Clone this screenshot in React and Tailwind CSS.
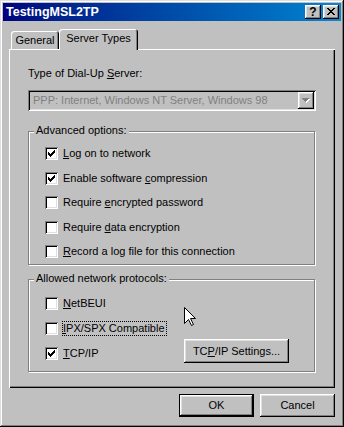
import React from "react";

const raised =
  "shadow-[inset_-1px_-1px_0_#000,inset_1px_1px_0_#fff,inset_-2px_-2px_0_#808080,inset_2px_2px_0_#dfdfdf]";
const sunken =
  "shadow-[inset_1px_1px_0_#808080,inset_-1px_-1px_0_#fff,inset_2px_2px_0_#000,inset_-2px_-2px_0_#dfdfdf]";

function Check({ checked }) {
  return (
    <span className={`relative block w-[13px] h-[13px] shrink-0 bg-white ${sunken}`}>
      {checked && (
        <svg
          width="7"
          height="7"
          viewBox="0 0 7 7"
          shapeRendering="crispEdges"
          className="absolute left-[3px] top-[3px]"
        >
          <path
            fill="#000"
            d="M6 0h1v1h-1zM5 1h2v1h-2zM0 2h1v1h-1zM4 2h3v1h-3zM0 3h2v1h-2zM3 3h3v1h-3zM0 4h5v1h-5zM1 5h3v1h-3zM2 6h1v1h-1z"
          />
        </svg>
      )}
    </span>
  );
}

function Row({ checked, children }) {
  return (
    <div className="flex items-center h-[13px] pl-[16px]">
      <Check checked={checked} />
      <span className="ml-[5px] leading-[13px] whitespace-nowrap">{children}</span>
    </div>
  );
}

function Group({ label, className, children }) {
  return (
    <div
      className={`relative w-[287px] border border-[#808080] shadow-[inset_1px_1px_0_#fff,1px_1px_0_#fff] ${className}`}
    >
      <span className="absolute left-[5px] top-[-8px] px-[2px] bg-[#c0c0c0] leading-[13px] whitespace-nowrap">
        {label}
      </span>
      {children}
    </div>
  );
}

export default function App() {
  return (
    <div className="relative w-[344px] h-[427px] bg-[#c0c0c0] p-[3px] flex flex-col font-['Liberation_Sans',Arial,sans-serif] text-[11px] text-black shadow-[inset_-1px_-1px_0_#000,inset_1px_1px_0_#dfdfdf,inset_-2px_-2px_0_#808080,inset_2px_2px_0_#fff]">
      {/* title bar */}
      <div className="h-[18px] flex items-center bg-linear-to-r from-[#000080] to-[#1084d0] pl-[3px] pr-[2px]">
        <span className="text-white font-bold text-[12.5px] leading-none">TestingMSL2TP</span>
        <div className="ml-auto flex gap-[2px]">
          <div className={`w-[16px] h-[14px] bg-[#c0c0c0] flex items-center justify-center font-bold text-[12px] leading-none ${raised}`}>
            ?
          </div>
          <div className={`relative w-[16px] h-[14px] bg-[#c0c0c0] ${raised}`}>
            <svg
              width="8"
              height="7"
              viewBox="0 0 8 7"
              shapeRendering="crispEdges"
              className="absolute left-[4px] top-[3px]"
            >
              <path
                fill="#000"
                d="M0 0h2v1h-2zM6 0h2v1h-2zM1 1h2v1h-2zM5 1h2v1h-2zM2 2h4v1h-4zM3 3h2v1h-2zM2 4h4v1h-4zM1 5h2v1h-2zM5 5h2v1h-2zM0 6h2v1h-2zM6 6h2v1h-2z"
              />
            </svg>
          </div>
        </div>
      </div>

      <div className="px-[6px] mt-[8px] flex flex-col">
        {/* tabs */}
        <div className="relative z-10 flex items-end h-[20px] pl-[2px]">
          <div className="w-[48px] h-[18px] flex items-center justify-center rounded-t-[3px] shadow-[inset_1px_1px_0_#fff,inset_-1px_0_0_#000,inset_-2px_0_0_#808080]">
            General
          </div>
          <div className="w-[79px] h-[21px] -mb-[1px] bg-[#c0c0c0] pb-[3px] flex items-center justify-center rounded-t-[3px] shadow-[inset_1px_1px_0_#fff,inset_-1px_0_0_#000,inset_-2px_0_0_#808080]">
            Server Types
          </div>
        </div>

        {/* panel */}
        <div className="h-[339px] pl-[19px] pt-[18px] flex flex-col shadow-[inset_1px_1px_0_#fff,inset_-1px_-1px_0_#000,inset_-2px_-2px_0_#808080]">
          <div className="leading-[13px]">
            Type of Dial-Up <u>S</u>erver:
          </div>
          <div className={`mt-[10px] w-[288px] h-[21px] flex items-center pl-[5px] pr-[2px] ${sunken}`}>
            <span className="text-[#808080] leading-[13px] whitespace-nowrap">
              PPP: Internet, Windows NT Server, Windows 98
            </span>
            <div className={`ml-auto w-[16px] h-[17px] relative ${raised}`}>
              <svg
                width="8"
                height="5"
                viewBox="0 0 8 5"
                shapeRendering="crispEdges"
                className="absolute left-[4px] top-[6px]"
              >
                <path fill="#fff" d="M1 1h7v1h-7zM2 2h5v1h-5zM3 3h3v1h-3zM4 4h1v1h-1z" />
                <path fill="#808080" d="M0 0h7v1h-7zM1 1h5v1h-5zM2 2h3v1h-3zM3 3h1v1h-1z" />
              </svg>
            </div>
          </div>

          <Group label="Advanced options:" className="mt-[20px] h-[134px] pt-[15px] flex flex-col gap-[11.5px]">
            <Row checked>
              <u>L</u>og on to network
            </Row>
            <Row checked>
              Enable software <u>c</u>ompression
            </Row>
            <Row>
              Require <u>e</u>ncrypted password
            </Row>
            <Row>
              Require <u>d</u>ata encryption
            </Row>
            <Row>
              <u>R</u>ecord a log file for this connection
            </Row>
          </Group>

          <Group label="Allowed network protocols:" className="mt-[14px] h-[93px] pt-[17px] flex flex-col gap-[12px]">
            <Row>
              <u>N</u>etBEUI
            </Row>
            <div className="flex items-center h-[13px] pl-[16px]">
              <Check />
              <span className="ml-[4px] pr-[1px] leading-[13px] border border-dotted border-black whitespace-nowrap">
                <u>I</u>PX/SPX Compatible
              </span>
            </div>
            <div className="flex items-center h-[13px] pl-[16px]">
              <div className="w-[139px] flex items-center">
                <Check checked />
                <span className="ml-[5px] leading-[13px]">
                  <u>T</u>CP/IP
                </span>
              </div>
              <div className={`w-[105px] h-[24px] mb-[5px] shrink-0 flex items-center justify-center leading-[13px] whitespace-nowrap ${raised}`}>
                TC<u>P</u>/IP Settings...
              </div>
            </div>
          </Group>
        </div>

        {/* bottom buttons */}
        <div className="mt-[6px] flex justify-end gap-[6px]">
          <div className="w-[75px] h-[23px] flex items-center justify-center shadow-[inset_0_0_0_1px_#000,inset_-2px_-2px_0_#000,inset_2px_2px_0_#fff,inset_-3px_-3px_0_#808080,inset_3px_3px_0_#dfdfdf]">
            OK
          </div>
          <div className={`w-[75px] h-[23px] flex items-center justify-center ${raised}`}>
            Cancel
          </div>
        </div>
      </div>

      {/* mouse pointer */}
      <svg
        width="12"
        height="20"
        viewBox="0 0 12 20"
        className="absolute left-[184px] top-[307px]"
      >
        <path
          d="M0.5 0.5V16.5L4.5 12.5L7.5 18.5L9.5 17.5L6.5 11.5H11.5Z"
          fill="#fff"
          stroke="#000"
          strokeWidth="1"
          strokeLinejoin="miter"
        />
      </svg>
    </div>
  );
}
